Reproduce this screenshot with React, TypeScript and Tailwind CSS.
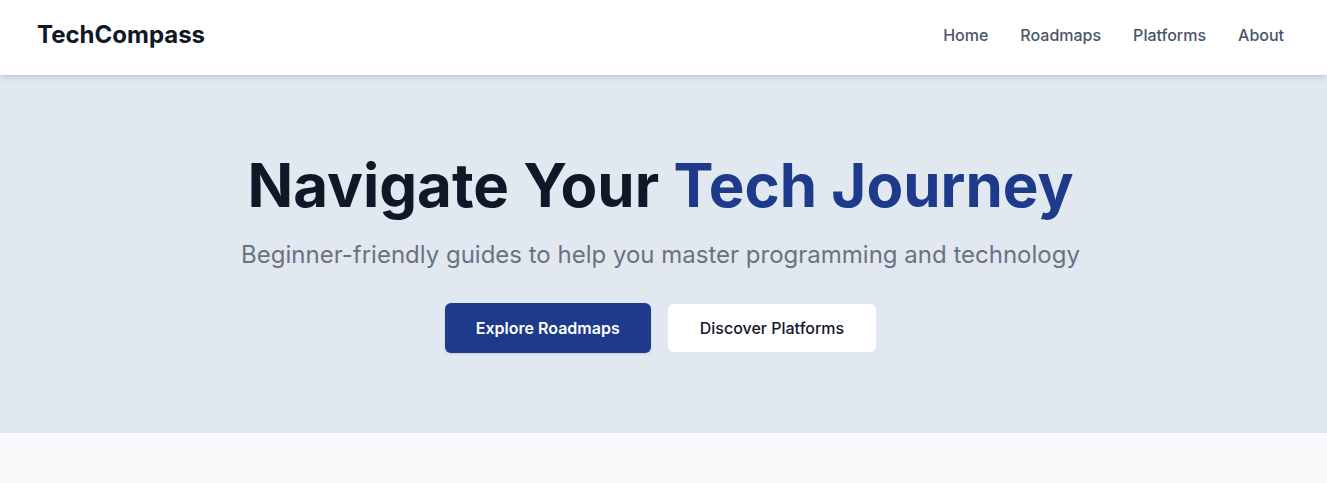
import React from 'react';

const navLinks = ['Home', 'Roadmaps', 'Platforms', 'About'];

// Top navigation bar
const Header: React.FC = () => (
    <header className="relative z-10 bg-white shadow-md">
        <div className="flex h-[75px] w-[1321px] items-center justify-between px-[37px] pb-[6px]">
            <span className="text-2xl font-bold text-gray-900">TechCompass</span>
            <nav className="flex items-center gap-8">
                {navLinks.map((link) => (
                    <a key={link} href="#" className="text-base font-medium text-gray-600">
                        {link}
                    </a>
                ))}
            </nav>
        </div>
    </header>
);

// Hero section with headline and call-to-action buttons
const Hero: React.FC = () => (
    <section className="bg-[#e2e8f0] py-20">
        <div className="w-[1321px] text-center">
            <h1 className="mb-6 text-6xl font-bold leading-none text-gray-900">
                Navigate Your <span className="text-[#1e3a8a]">Tech Journey</span>
            </h1>
            <p className="mb-8 text-2xl text-gray-500">
                Beginner-friendly guides to help you master programming and technology
            </p>
            <div className="flex items-center justify-center gap-[17px]">
                <button
                    type="button"
                    className="rounded-md bg-[#1e3a8a] px-[31px] py-[13px] text-base font-semibold text-white shadow-sm"
                >
                    Explore Roadmaps
                </button>
                <button
                    type="button"
                    className="rounded-md bg-white px-8 py-3 text-base font-medium text-gray-900"
                >
                    Discover Platforms
                </button>
            </div>
        </div>
    </section>
);

export default function App() {
    return (
        <div className="min-h-screen bg-[#f8fafc]" style={{ fontFamily: 'Inter, "Noto Sans", sans-serif' }}>
            <Header />
            <Hero />
        </div>
    );
}
